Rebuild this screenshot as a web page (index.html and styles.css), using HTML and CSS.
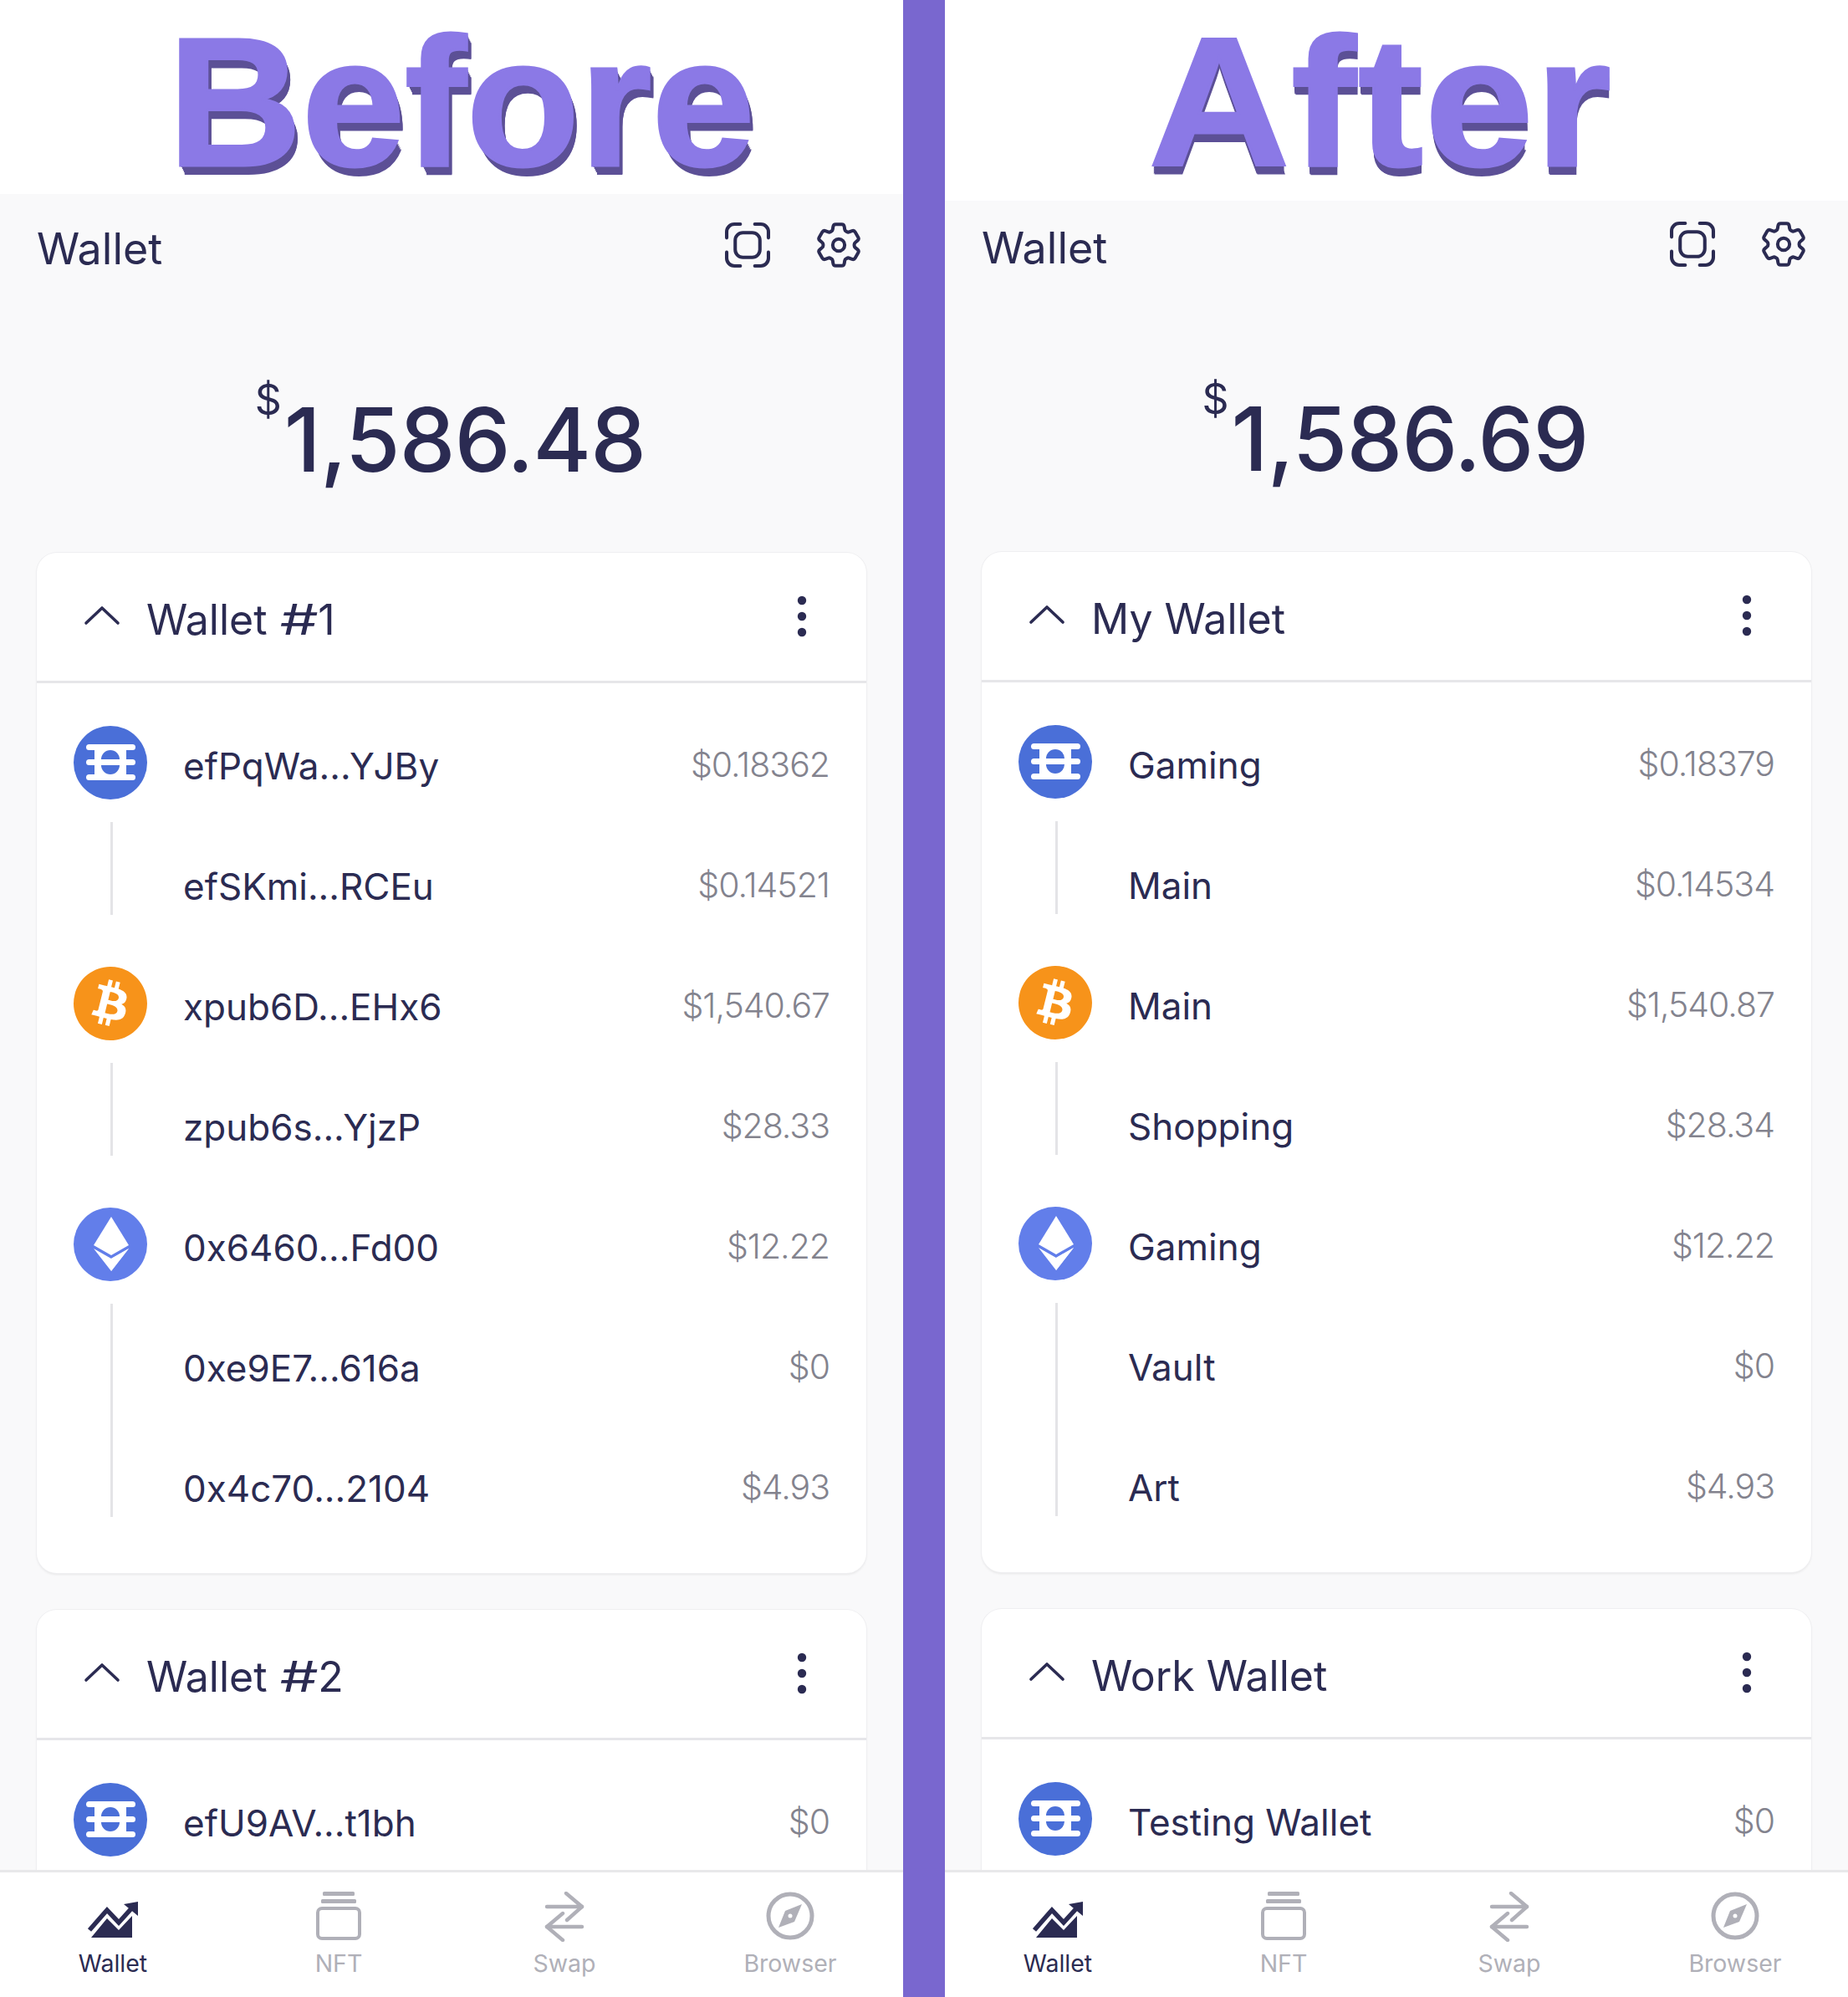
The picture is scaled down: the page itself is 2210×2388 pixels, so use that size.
FILE: index.html
```html
<!DOCTYPE html>
<html lang="en">
<head>
<meta charset="utf-8">
<title>Before and After</title>
<link rel="stylesheet" href="styles.css">
</head>
<body>
<svg class="defs" width="0" height="0" aria-hidden="true">
  <symbol id="i-scan" viewBox="0 0 53 53"><g fill="none" stroke="currentColor" stroke-width="4" stroke-linecap="round" stroke-linejoin="round"><path d="M2 18V11a9 9 0 0 1 9-9h7"/><path d="M35 2h7a9 9 0 0 1 9 9v7"/><path d="M51 35v7a9 9 0 0 1-9 9h-7"/><path d="M18 51h-7a9 9 0 0 1-9-9v-7"/><rect x="12" y="12" width="29" height="29" rx="9"/></g></symbol>
  <symbol id="i-gear" viewBox="2.2 2.2 19.6 19.6"><g fill="none" stroke="currentColor" stroke-width="1.45" stroke-linejoin="round"><path d="M9.594 3.94c.09-.542.56-.94 1.11-.94h2.593c.55 0 1.02.398 1.11.94l.213 1.281c.063.374.313.686.645.87.074.04.147.083.22.127.325.196.72.257 1.075.124l1.217-.456a1.125 1.125 0 011.37.49l1.296 2.247a1.125 1.125 0 01-.26 1.431l-1.003.827c-.293.241-.438.613-.43.992a7.723 7.723 0 010 .255c-.008.378.137.75.43.991l1.004.827c.424.35.534.955.26 1.43l-1.298 2.247a1.125 1.125 0 01-1.369.491l-1.217-.456c-.355-.133-.75-.072-1.076.124a6.47 6.47 0 01-.22.128c-.331.183-.581.495-.644.869l-.213 1.281c-.09.543-.56.94-1.11.94h-2.594c-.55 0-1.019-.398-1.11-.94l-.213-1.281c-.062-.374-.312-.686-.644-.87a6.52 6.52 0 01-.22-.127c-.325-.196-.72-.257-1.076-.124l-1.217.456a1.125 1.125 0 01-1.369-.49l-1.297-2.247a1.125 1.125 0 01.26-1.431l1.004-.827c.292-.24.437-.613.43-.991a6.932 6.932 0 010-.255c.007-.38-.138-.751-.43-.992l-1.004-.827a1.125 1.125 0 01-.26-1.43l1.297-2.247a1.125 1.125 0 011.37-.491l1.216.456c.356.133.751.072 1.076-.124.072-.044.146-.086.22-.128.332-.183.582-.495.644-.869l.214-1.28z"/><circle cx="12" cy="12" r="2.6"/></g></symbol>
  <symbol id="i-chev" viewBox="0 0 44 24"><path d="M3 21 22 3l19 18" fill="none" stroke="currentColor" stroke-width="3.6" stroke-linecap="round" stroke-linejoin="round"/></symbol>
  <symbol id="i-more" viewBox="0 0 12 50"><circle cx="6" cy="6" r="5.2" fill="currentColor"/><circle cx="6" cy="25" r="5.2" fill="currentColor"/><circle cx="6" cy="44" r="5.2" fill="currentColor"/></symbol>
  <symbol id="c-efi" viewBox="0 0 88 88"><circle cx="44" cy="44" r="44" fill="#4a6fd8"/><rect x="25" y="24" width="38" height="40" fill="#fff"/><rect x="15" y="22" width="59" height="7" rx="3.5" fill="#fff"/><rect x="15" y="40" width="59" height="7" rx="3.5" fill="#fff"/><rect x="15" y="58" width="59" height="7" rx="3.5" fill="#fff"/><path d="M33 40a11 11 0 0 1 22 0Z" fill="#4a6fd8"/><path d="M33 47a11 11 0 0 0 22 0Z" fill="#4a6fd8"/></symbol>
  <symbol id="c-btc" viewBox="0 0 24 24"><path fill="#f7931a" d="M23.638 14.904c-1.602 6.43-8.113 10.34-14.542 8.736C2.67 22.05-1.244 15.525.362 9.105 1.962 2.67 8.475-1.243 14.9.358c6.43 1.605 10.342 8.115 8.738 14.548v-.002zm-6.35-4.613c.24-1.59-.974-2.45-2.64-3.03l.54-2.153-1.315-.33-.525 2.107c-.345-.087-.705-.167-1.064-.25l.526-2.127-1.32-.33-.54 2.165c-.285-.067-.565-.132-.84-.2l-1.815-.45-.35 1.407s.975.225.955.236c.535.136.63.486.615.766l-1.477 5.92c-.075.166-.24.406-.614.314.015.02-.96-.24-.96-.24l-.66 1.51 1.71.426.93.242-.54 2.19 1.32.327.54-2.17c.36.1.705.19 1.05.273l-.51 2.154 1.32.33.545-2.19c2.24.427 3.93.257 4.64-1.774.57-1.637-.03-2.58-1.217-3.196.854-.193 1.5-.76 1.68-1.93h.01zm-3.01 4.22c-.404 1.64-3.157.75-4.05.53l.72-2.9c.896.23 3.757.67 3.33 2.37zm.41-4.24c-.37 1.49-2.662.735-3.405.55l.654-2.64c.744.18 3.137.524 2.75 2.084v.006z"/></symbol>
  <symbol id="c-eth" viewBox="0 0 88 88"><circle cx="44" cy="44" r="44" fill="#627eea"/><path d="M45 11 66 45 45 57 24 45Z" fill="#fff"/><path d="M24 49 45 61 66 49 45 76Z" fill="#fff"/><path d="M45 61 66 49 45 76Z" fill="#fff" opacity=".85"/></symbol>
  <symbol id="t-wallet" viewBox="0 0 62 44"><path d="M3 34 24 10l14 15L56 5" fill="none" stroke="currentColor" stroke-width="5.5"/><path d="M44 3 61 0v17Z" fill="currentColor"/><path d="M5 43 24 20l14 14 16-17v26Z" fill="currentColor"/></symbol>
  <symbol id="t-nft" viewBox="0 0 54 58"><rect x="8" y="0" width="38" height="5" rx="1.5" fill="currentColor"/><rect x="6" y="9" width="42" height="5" rx="1.5" fill="currentColor"/><rect x="2" y="20" width="50" height="36" rx="5" fill="none" stroke="currentColor" stroke-width="4"/></symbol>
  <symbol id="t-swap" viewBox="0 0 48 60"><g fill="none" stroke="currentColor" stroke-width="4.4" stroke-linecap="round" stroke-linejoin="round"><path d="M3 18h42L26 2"/><path d="M45 18 27 34"/><path d="M45 42H3l19-16"/><path d="M3 42l19 16"/></g></symbol>
  <symbol id="t-compass" viewBox="0 0 58 58"><circle cx="29" cy="29" r="26" fill="none" stroke="currentColor" stroke-width="5"/><path d="M43 15 34 36 15 43 23 23Z" fill="currentColor"/><circle cx="29" cy="29" r="2.5" fill="#fff"/></symbol>
</svg>

<div class="page">
  <section class="panel panel-before">
    <header class="band"><h1 class="shout shout-before">Before</h1></header>
    <main class="app">
      <div class="appbar"><span class="app-title">Wallet</span><span class="app-actions"><svg class="ic-top"><use href="#i-scan"/></svg><svg class="ic-top"><use href="#i-gear"/></svg></span></div>
      <div class="balance"><sup class="cur">$</sup><span class="amt">1,586.48</span></div>
      <div class="card">
        <div class="card-head"><svg class="chev"><use href="#i-chev"/></svg><span class="card-title">Wallet <span class="hash">#</span>1</span><svg class="more"><use href="#i-more"/></svg></div>
        <div class="card-body">
          <div class="row"><svg class="coin"><use href="#c-efi"/></svg><span class="name">efPqWa...YJBy</span><span class="val">$0.18362</span></div>
          <div class="row sub last"><span class="name">efSKmi...RCEu</span><span class="val">$0.14521</span></div>
          <div class="row"><svg class="coin"><use href="#c-btc"/></svg><span class="name">xpub6D...EHx6</span><span class="val">$1,540.67</span></div>
          <div class="row sub last"><span class="name">zpub6s...YjzP</span><span class="val">$28.33</span></div>
          <div class="row"><svg class="coin"><use href="#c-eth"/></svg><span class="name">0x6460...Fd00</span><span class="val">$12.22</span></div>
          <div class="row sub"><span class="name">0xe9E7...616a</span><span class="val">$0</span></div>
          <div class="row sub last"><span class="name">0x4c70...2104</span><span class="val">$4.93</span></div>
        </div>
      </div>
      <div class="card">
        <div class="card-head"><svg class="chev"><use href="#i-chev"/></svg><span class="card-title">Wallet <span class="hash">#</span>2</span><svg class="more"><use href="#i-more"/></svg></div>
        <div class="card-body">
          <div class="row"><svg class="coin"><use href="#c-efi"/></svg><span class="name">efU9AV...t1bh</span><span class="val">$0</span></div>
        </div>
      </div>
    </main>
    <nav class="tabs">
      <div class="tab on"><svg class="tab-wallet"><use href="#t-wallet"/></svg><span>Wallet</span></div>
      <div class="tab"><svg class="tab-nft"><use href="#t-nft"/></svg><span>NFT</span></div>
      <div class="tab"><svg class="tab-swap"><use href="#t-swap"/></svg><span>Swap</span></div>
      <div class="tab"><svg class="tab-compass"><use href="#t-compass"/></svg><span>Browser</span></div>
    </nav>
  </section>

  <div class="divider"></div>

  <section class="panel panel-after">
    <header class="band"><h1 class="shout shout-after">After</h1></header>
    <main class="app">
      <div class="appbar"><span class="app-title">Wallet</span><span class="app-actions"><svg class="ic-top"><use href="#i-scan"/></svg><svg class="ic-top"><use href="#i-gear"/></svg></span></div>
      <div class="balance"><sup class="cur">$</sup><span class="amt">1,586.69</span></div>
      <div class="card">
        <div class="card-head"><svg class="chev"><use href="#i-chev"/></svg><span class="card-title">My Wallet</span><svg class="more"><use href="#i-more"/></svg></div>
        <div class="card-body">
          <div class="row"><svg class="coin"><use href="#c-efi"/></svg><span class="name">Gaming</span><span class="val">$0.18379</span></div>
          <div class="row sub last"><span class="name">Main</span><span class="val">$0.14534</span></div>
          <div class="row"><svg class="coin"><use href="#c-btc"/></svg><span class="name">Main</span><span class="val">$1,540.87</span></div>
          <div class="row sub last"><span class="name">Shopping</span><span class="val">$28.34</span></div>
          <div class="row"><svg class="coin"><use href="#c-eth"/></svg><span class="name">Gaming</span><span class="val">$12.22</span></div>
          <div class="row sub"><span class="name">Vault</span><span class="val">$0</span></div>
          <div class="row sub last"><span class="name">Art</span><span class="val">$4.93</span></div>
        </div>
      </div>
      <div class="card">
        <div class="card-head"><svg class="chev"><use href="#i-chev"/></svg><span class="card-title">Work Wallet</span><svg class="more"><use href="#i-more"/></svg></div>
        <div class="card-body">
          <div class="row"><svg class="coin"><use href="#c-efi"/></svg><span class="name">Testing Wallet</span><span class="val">$0</span></div>
        </div>
      </div>
    </main>
    <nav class="tabs">
      <div class="tab on"><svg class="tab-wallet"><use href="#t-wallet"/></svg><span>Wallet</span></div>
      <div class="tab"><svg class="tab-nft"><use href="#t-nft"/></svg><span>NFT</span></div>
      <div class="tab"><svg class="tab-swap"><use href="#t-swap"/></svg><span>Swap</span></div>
      <div class="tab"><svg class="tab-compass"><use href="#t-compass"/></svg><span>Browser</span></div>
    </nav>
  </section>
</div>
</body>
</html>
```
FILE: styles.css
```css
* { box-sizing: border-box; }
html, body { margin: 0; padding: 0; background: #fff; }
body { font-family: Inter, "Noto Sans", sans-serif; color: #2b2b52; }
.defs { position: absolute; }

.page { display: flex; width: 2210px; height: 2388px; overflow: hidden; }
.divider { width: 50px; flex: none; background: #7967cf; }
.panel { width: 1080px; flex: none; display: flex; flex-direction: column; height: 2388px; }

.band { display: flex; justify-content: center; align-items: center; background: #fff; flex: none; }
.panel-before .band { height: 232px; }
.panel-after .band { height: 240px; }
.shout {
  margin: 0;
  font-family: "Liberation Sans", Arial, sans-serif;
  font-weight: 700;
  font-size: 212px;
  line-height: 1;
  color: #8b79e6;
  -webkit-text-stroke: 3px #8b79e6;
  transform-origin: 50% 100%;
}
.shout-before {
  transform: translate(12px, 10px) scaleX(1.045) scaleY(1.03);
  text-shadow: 1px 2px 0 #5c5096, 2px 4px 0 #5c5096, 3px 6px 0 #5c5096, 4px 8px 0 #5c5096, 5px 10px 0 #5c5096, 5px 11px 0 #5c5096;
}
.shout-after {
  transform: translate(-19px, 6px) scaleX(1.1) scaleY(1.03);
  letter-spacing: 2px;
  text-shadow: 0 2px 0 #5c5096, 0 4px 0 #5c5096, 0 6px 0 #5c5096, 0 8px 0 #5c5096, 0 10px 0 #5c5096, 1px 11px 0 #5c5096;
}

.app { flex: 1; min-height: 0; overflow: hidden; background: #f9f9fa; padding: 0 44px; }
.appbar { display: flex; justify-content: space-between; align-items: center; padding-right: 6px; }
.panel-before .appbar { height: 130px; }
.panel-after .appbar { height: 112px; }
.app-title { font-size: 52px; font-weight: 400; }
.app-actions { display: flex; gap: 55px; margin-top: -8px; }
.ic-top { width: 54px; height: 54px; color: #2b2b52; display: block; }

.balance { display: flex; justify-content: center; align-items: flex-start; height: 299px; padding-top: 100px; }
.panel-after .balance { height: 308px; padding-top: 109px; }
.cur { font-size: 50px; line-height: 1; margin: -9px 3px 0 -3px; vertical-align: baseline; }
.amt { font-size: 106px; font-weight: 500; line-height: 1.2; letter-spacing: -0.8px; }

.card { background: #fff; border-radius: 24px; box-shadow: 0 0 0 1px #efeff1, 0 2px 3px rgba(0,0,0,.08); margin-bottom: 44px; }
.card-head { display: flex; align-items: center; height: 156px; padding: 0 71px 0 56px; border-bottom: 3px solid #e6e6e9; }
.chev { width: 44px; height: 24px; color: #2b2b52; margin-top: -3px; }
.card-title { font-size: 50px; margin-left: 31px; margin-top: 7px; flex: 1; }
.hash { display: inline-block; transform: scaleX(1.45); margin: 0 7px 0 8px; }
.more { width: 12px; height: 50px; color: #2b2b52; margin-top: -2px; }

.card-body { padding: 25px 44px 31px; }
.row { display: flex; align-items: center; height: 144px; position: relative; padding-left: 131px; }
.row .coin { position: absolute; left: 0; top: 26px; width: 88px; height: 88px; }
.row.sub::before { content: ""; position: absolute; left: 44px; top: -3px; bottom: 0; width: 3px; background: #e4e4e7; }
.row.sub.last::before { bottom: 36px; }
.row .name { flex: 1; font-size: 44px; margin-top: 3px; }
.row .val { font-size: 41px; font-weight: 300; color: #83838e; letter-spacing: -1px; }

.tabs { flex: none; height: 152px; display: grid; grid-template-columns: repeat(4, 1fr); background: #fff; border-top: 3px solid #e8e8ea; }
.tab { position: relative; display: flex; flex-direction: column; align-items: center; justify-content: flex-end; padding-bottom: 23px; font-size: 28.5px; color: #b0b0b8; }
.tab.on { color: #2b2b52; }
.tab svg { position: absolute; left: 50%; transform: translateX(-50%); }
.tab-wallet { width: 62px; height: 44px; top: 35px; }
.tab-nft { width: 54px; height: 58px; top: 23px; }
.tab-swap { width: 48px; height: 60px; top: 23px; }
.tab-compass { width: 58px; height: 58px; top: 23px; }
```
